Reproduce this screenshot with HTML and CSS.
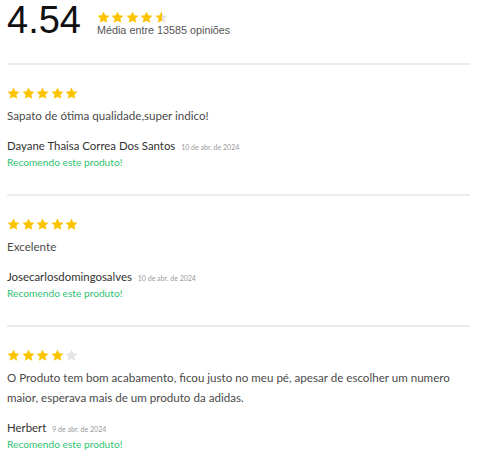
FILE: index.html
```html
<!DOCTYPE html>
<html lang="pt-BR">
<head>
    <meta charset="UTF-8">
    <title>Opiniões</title>
    <link rel="stylesheet" href="styles.css">
</head>
<body>

<svg class="defs" width="0" height="0">
    <defs>
        <symbol id="star" viewBox="0 0 24 24">
            <path d="M12 1l3.3 7 7.7.9-5.7 5.2 1.6 7.6L12 17.9l-6.9 3.8 1.6-7.6L1 8.9l7.7-.9z"/>
        </symbol>
        <linearGradient id="half">
            <stop offset="54%" stop-color="#fcc400"/>
            <stop offset="54%" stop-color="#e4e4e4"/>
        </linearGradient>
    </defs>
</svg>

<div class="reviews">
    <!-- Summary -->
    <div class="summary">
        <span class="average">4.54</span>
        <div class="summary-info">
            <div class="stars">
                <svg class="star"><use href="#star"/></svg>
                <svg class="star"><use href="#star"/></svg>
                <svg class="star"><use href="#star"/></svg>
                <svg class="star"><use href="#star"/></svg>
                <svg class="star half"><use href="#star"/></svg>
            </div>
            <p class="count">Média entre 13585 opiniões</p>
        </div>
    </div>

    <!-- Review list -->
    <ul class="review-list">
        <li class="review">
            <div class="stars">
                <svg class="star"><use href="#star"/></svg>
                <svg class="star"><use href="#star"/></svg>
                <svg class="star"><use href="#star"/></svg>
                <svg class="star"><use href="#star"/></svg>
                <svg class="star"><use href="#star"/></svg>
            </div>
            <p class="text">Sapato de ótima qualidade,super indico!</p>
            <p class="author">Dayane Thaisa Correa Dos Santos <span class="date">10 de abr. de 2024</span></p>
            <p class="recommend">Recomendo este produto!</p>
        </li>
        <li class="review">
            <div class="stars">
                <svg class="star"><use href="#star"/></svg>
                <svg class="star"><use href="#star"/></svg>
                <svg class="star"><use href="#star"/></svg>
                <svg class="star"><use href="#star"/></svg>
                <svg class="star"><use href="#star"/></svg>
            </div>
            <p class="text">Excelente</p>
            <p class="author">Josecarlosdomingosalves <span class="date">10 de abr. de 2024</span></p>
            <p class="recommend">Recomendo este produto!</p>
        </li>
        <li class="review">
            <div class="stars">
                <svg class="star"><use href="#star"/></svg>
                <svg class="star"><use href="#star"/></svg>
                <svg class="star"><use href="#star"/></svg>
                <svg class="star"><use href="#star"/></svg>
                <svg class="star empty"><use href="#star"/></svg>
            </div>
            <p class="text">O Produto tem bom acabamento, ficou justo no meu pé, apesar de escolher um numero maior, esperava mais de um produto da adidas.</p>
            <p class="author">Herbert <span class="date">9 de abr. de 2024</span></p>
            <p class="recommend">Recomendo este produto!</p>
        </li>
    </ul>
</div>

</body>
</html>
```

FILE: styles.css
```css
body {
    margin: 0;
    background-color: #ffffff;
    font-family: Lato, "Noto Sans", sans-serif;
    color: #444;
}
p {
    margin: 0;
}
.defs {
    position: absolute;
}
.reviews {
    width: 463px;
    margin-left: 7px;
}
.summary {
    display: flex;
    align-items: flex-start;
    gap: 16px;
    padding-bottom: 23px;
    border-bottom: 2px solid #ececec;
}
.average {
    font-family: "Liberation Sans", Arial, sans-serif;
    font-size: 38px;
    line-height: 40px;
    color: #111;
}
.summary-info {
    padding-top: 11px;
}
.count {
    font-family: "Liberation Sans", Arial, sans-serif;
    font-size: 10.8px;
    line-height: 12px;
    color: #555;
}
.stars {
    display: flex;
    gap: 1.5px;
}
.star {
    width: 13px;
    height: 13px;
    fill: #fcc400;
}
.star.empty {
    fill: #e4e4e4;
}
.star.half {
    fill: url(#half);
}
.review-list {
    list-style: none;
    margin: 0;
    padding: 0;
}
.review {
    padding: 22px 0 25px;
    border-bottom: 2px solid #ececec;
}
.review:last-child {
    border-bottom: none;
}
.text {
    margin-top: 6px;
    font-size: 11.6px;
    line-height: 20px;
    color: #4a4a4a;
}
.author {
    margin-top: 12px;
    font-size: 11.4px;
    line-height: 16px;
    color: #333;
}
.date {
    margin-left: 3px;
    font-size: 7px;
    color: #999;
}
.recommend {
    font-size: 10.2px;
    line-height: 14px;
    color: #2fc373;
}
```
